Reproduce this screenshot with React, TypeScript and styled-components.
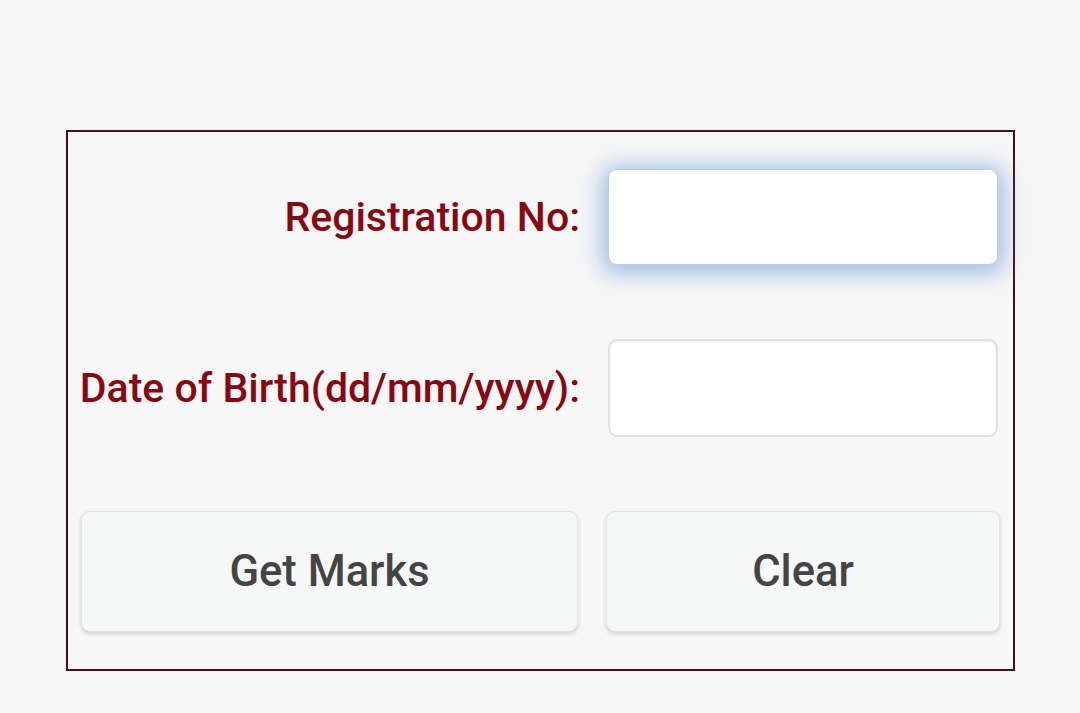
import React, { useState } from 'react';
import styled, { createGlobalStyle } from 'styled-components';

const GlobalStyle = createGlobalStyle`
  body {
    margin: 0;
    background-color: #f7f7f7;
    font-family: Roboto, "Liberation Sans", Arial, sans-serif;
  }
`;

const Page = styled.div`
  padding: 130px 0 0 66px;
`;

const Frame = styled.form`
  box-sizing: border-box;
  display: grid;
  grid-template-columns: 497px 394px;
  grid-template-rows: 96px 98px 121px;
  column-gap: 28px;
  row-gap: 74px;
  width: 949px;
  padding: 37px 13px 37px 13px;
  border: 2px solid #4b0d1b;
  background-color: #f7f7f7;
`;

const Label = styled.label`
  align-self: center;
  justify-self: end;
  margin-right: -2px; /* text runs a hair past the column */
  font-size: 41px;
  font-weight: 500;
  color: #880713;
  white-space: nowrap;
`;

const Field = styled.input<{ $focused?: boolean }>`
  box-sizing: border-box;
  width: 390px;
  height: 100%;
  margin-left: 2px;
  padding: 0 16px;
  font-size: 32px;
  font-family: inherit;
  background-color: #ffffff;
  border-radius: 9px;
  outline: none;
  border: ${p => (p.$focused ? '1px solid #b9cfe6' : '2px solid #e2e2e2')};
  box-shadow: ${p =>
    p.$focused
      ? '0 3px 22px 7px rgba(100, 150, 210, 0.55)'
      : 'inset 0 1px 3px rgba(0, 0, 0, 0.06)'};
`;

const ActionButton = styled.button`
  box-sizing: border-box;
  height: 100%;
  width: 100%;
  font-family: inherit;
  font-size: 43.5px;
  font-weight: 500;
  color: #444444;
  background-color: #f6f7f7;
  border: 1px solid #e2e2e2;
  border-radius: 9px;
  box-shadow: 0 2px 4px rgba(0, 0, 0, 0.16);
  cursor: pointer;
`;

const App = () => {
  const [regNo, setRegNo] = useState('');
  const [dob, setDob] = useState('');

  const clear = () => {
    setRegNo('');
    setDob('');
  };

  return (
    <>
      <GlobalStyle />
      <Page>
        <Frame onSubmit={e => e.preventDefault()}>
          <Label htmlFor="regno">Registration No:</Label>
          <Field id="regno" $focused value={regNo} onChange={e => setRegNo(e.target.value)} />

          <Label htmlFor="dob">Date of Birth(dd/mm/yyyy):</Label>
          <Field id="dob" value={dob} onChange={e => setDob(e.target.value)} />

          <ActionButton type="submit">Get Marks</ActionButton>
          <ActionButton type="button" onClick={clear}>Clear</ActionButton>
        </Frame>
      </Page>
    </>
  );
};

export default App;
